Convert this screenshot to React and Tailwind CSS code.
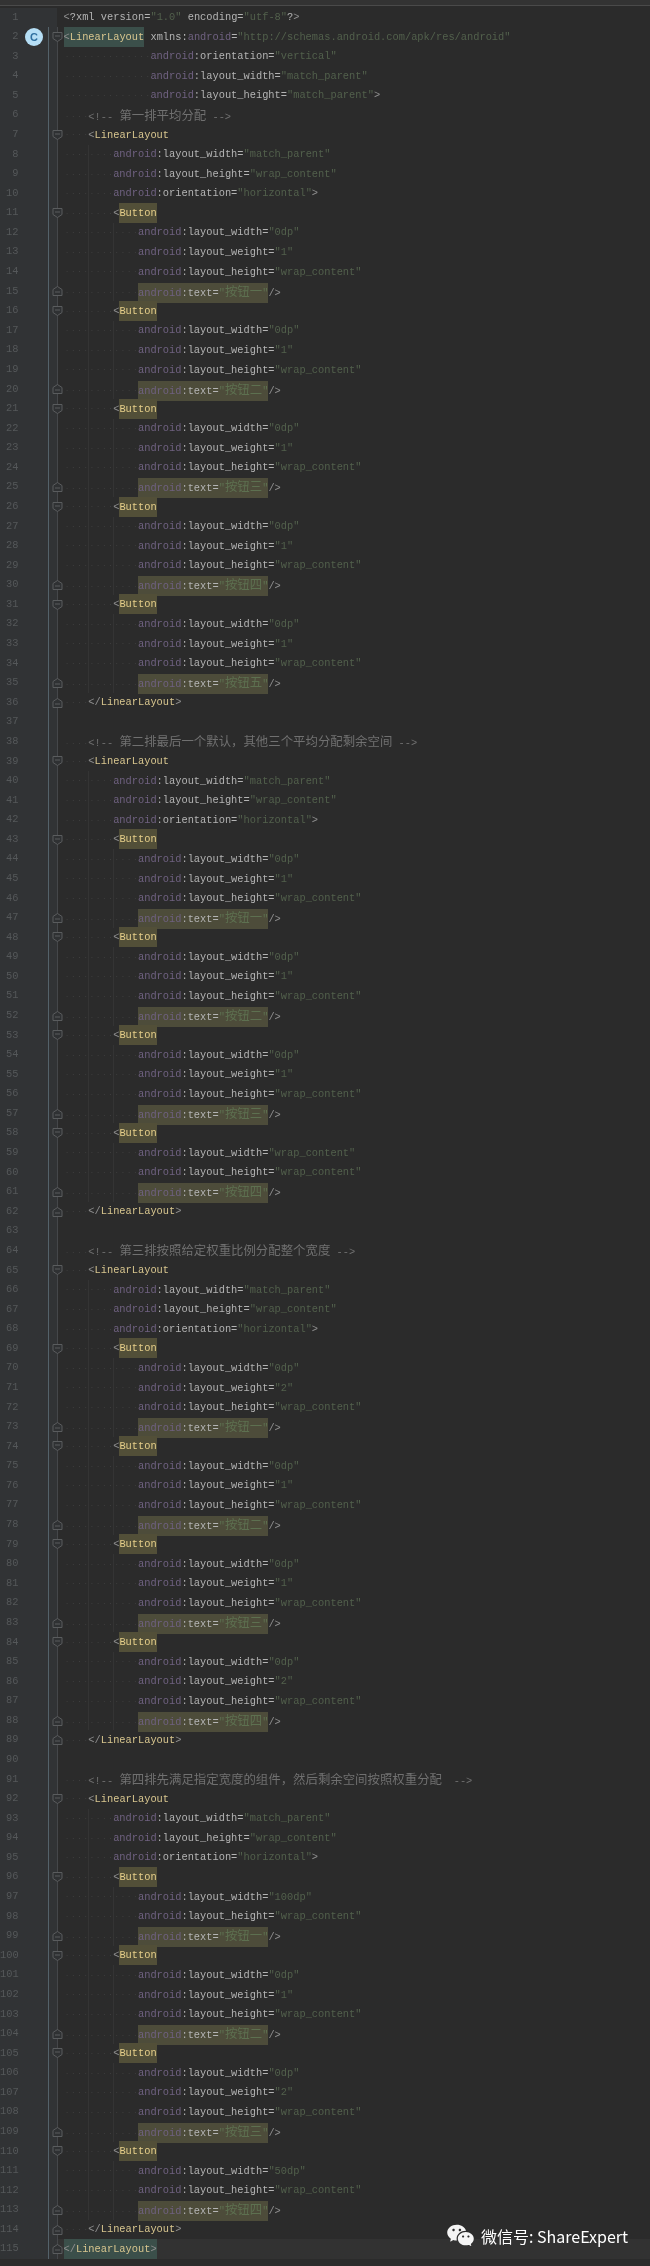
import { RiWechatFill } from 'react-icons/ri';

const attr = (name, value, end = '') => ({ name, value, end });

const row = (weight, width = '0dp') => [
  attr('layout_width', width),
  ...(weight ? [attr('layout_weight', weight)] : []),
  attr('layout_height', 'wrap_content'),
];

const groups = [
  {
    comment: '第一排平均分配',
    buttons: [
      ['按钮一', row('1')], ['按钮二', row('1')], ['按钮三', row('1')], ['按钮四', row('1')], ['按钮五', row('1')],
    ],
  },
  {
    comment: '第二排最后一个默认，其他三个平均分配剩余空间',
    buttons: [
      ['按钮一', row('1')], ['按钮二', row('1')], ['按钮三', row('1')], ['按钮四', row(null, 'wrap_content')],
    ],
  },
  {
    comment: '第三排按照给定权重比例分配整个宽度',
    buttons: [
      ['按钮一', row('2')], ['按钮二', row('1')], ['按钮三', row('1')], ['按钮四', row('2')],
    ],
  },
  {
    comment: '第四排先满足指定宽度的组件，然后剩余空间按照权重分配  ',
    buttons: [
      ['按钮一', row(null, '100dp')], ['按钮二', row('1')], ['按钮三', row('2')], ['按钮四', row(null, '50dp')],
    ],
  },
];

function buildLines() {
  const lines = [
    { type: 'xml' },
    { type: 'root' },
    { type: 'attr', pad: 14, ...attr('orientation', 'vertical') },
    { type: 'attr', pad: 14, ...attr('layout_width', 'match_parent') },
    { type: 'attr', pad: 14, ...attr('layout_height', 'match_parent', '>') },
  ];
  groups.forEach((g, i) => {
    if (i > 0) lines.push({ type: 'blank' });
    lines.push({ type: 'comment', pad: 4, text: g.comment });
    lines.push({ type: 'open', pad: 4, tag: 'LinearLayout' });
    lines.push({ type: 'attr', pad: 8, ...attr('layout_width', 'match_parent') });
    lines.push({ type: 'attr', pad: 8, ...attr('layout_height', 'wrap_content') });
    lines.push({ type: 'attr', pad: 8, ...attr('orientation', 'horizontal', '>') });
    g.buttons.forEach(([label, attrs]) => {
      lines.push({ type: 'open', pad: 8, tag: 'Button', hl: true });
      attrs.forEach((a) => lines.push({ type: 'attr', pad: 12, ...a }));
      lines.push({ type: 'text', pad: 12, label });
    });
    lines.push({ type: 'close', pad: 4 });
    if (i === groups.length - 1) lines.push({ type: 'rootClose' });
  });
  return lines;
}

const Lt = () => <span className="text-[#8f8f8f]">&lt;</span>;
const Gt = () => <span className="text-[#8f8f8f]">&gt;</span>;

// leading whitespace is shown as faint dots in the editor
const Pad = ({ n }) => (
  <span
    className="inline-block h-[3px] bg-[radial-gradient(circle,#3e3e3e_0.5px,transparent_0.8px)] bg-[length:1ch_3px] align-middle"
    style={{ width: `${n}ch` }}
  />
);

const Android = () => (
  <>
    <span className="text-[#6f6180]">android</span>
    <span className="text-[#a9a9a9]">:</span>
  </>
);

const Cjk = ({ children }) => (
  <span className="font-['Noto_Sans_CJK_SC',sans-serif] text-[12.42px] leading-none">{children}</span>
);

function Code({ line }) {
  switch (line.type) {
    case 'xml':
      return (
        <>
          <Lt /><span className="text-[#b4b4b4]">?xml version=</span>
          <span className="text-[#52604c]">"1.0"</span>
          <span className="text-[#b4b4b4]"> encoding=</span>
          <span className="text-[#52604c]">"utf-8"</span>
          <span className="text-[#b4b4b4]">?</span><Gt />
        </>
      );
    case 'root':
      return (
        <>
          <span className="relative before:absolute before:inset-x-0 before:top-[-4px] before:bottom-[-4px] before:bg-[#3b4f4a]">
            <span className="relative">
              <Lt /><span className="text-[#d8c68f]">LinearLayout</span>
            </span>
          </span>
          <span className="text-[#b4b4b4]"> xmlns:</span>
          <span className="text-[#6f6180]">android</span>
          <span className="text-[#b4b4b4]">=</span>
          <span className="text-[#52604c]">"http://schemas.android.com/apk/res/android"</span>
        </>
      );
    case 'attr':
      return (
        <>
          <Pad n={line.pad} /><Android />
          <span className="text-[#b4b4b4]">{line.name}=</span>
          <span className="text-[#52604c]">"{line.value}"</span>
          {line.end && <Gt />}
        </>
      );
    case 'comment':
      return (
        <>
          <Pad n={line.pad} />
          <span className="text-[#707070]">
            {'<!-- '}
            <Cjk>{line.text}</Cjk>
            {' -->'}
          </span>
        </>
      );
    case 'open':
      return (
        <>
          <Pad n={line.pad} /><Lt />
          {line.hl ? (
            <span className="relative text-[#e6cf8a] before:absolute before:inset-x-0 before:top-[-4px] before:bottom-[-4px] before:bg-[#524f38]">
              <span className="relative">{line.tag}</span>
            </span>
          ) : (
            <span className="text-[#d8c68f]">{line.tag}</span>
          )}
        </>
      );
    case 'text':
      return (
        <>
          <Pad n={line.pad} />
          <span className="relative before:absolute before:inset-x-0 before:top-[-4px] before:bottom-[-4px] before:bg-[#4d4c3a]">
            <span className="relative">
              <Android />
              <span className="text-[#b4b4b4]">text=</span>
              <span className="text-[#5d7050]">
                "<Cjk>{line.label}</Cjk>"
              </span>
            </span>
          </span>
          <span className="text-[#8f8f8f]">/&gt;</span>
        </>
      );
    case 'close':
      return (
        <>
          <Pad n={line.pad} /><span className="text-[#8f8f8f]">&lt;/</span>
          <span className="text-[#d8c68f]">LinearLayout</span><Gt />
        </>
      );
    case 'rootClose':
      return (
        <span className="relative before:absolute before:inset-x-0 before:top-[-4px] before:bottom-[-4px] before:bg-[#3b4f4a]">
          <span className="relative">
            <span className="text-[#8f8f8f]">&lt;/</span>
            <span className="text-[#d8c68f]">LinearLayout</span><Gt />
          </span>
        </span>
      );
    default:
      return null;
  }
}

// fold marker on the gutter edge: pentagon pointing down for an open tag, up for a close
function Fold({ kind }) {
  return (
    <svg width="11" height="11" viewBox="0 0 11 11" className="absolute left-[52px] top-1/2 -translate-y-1/2">
      <path
        d={kind === 'open' ? 'M1 1h9v6l-4.500 3L1 7z M3 4.500h5' : 'M1 10h9V4L5.500 1 1 4z M3 6.500h5'}
        fill="#2f3133"
        stroke="#5a5c5e"
      />
    </svg>
  );
}

const foldKind = (line) => {
  if (line.type === 'root' || line.type === 'open') return 'open';
  if (line.type === 'text' || line.type === 'close' || line.type === 'rootClose') return 'close';
  return null;
};

export default function App() {
  const lines = buildLines();

  return (
    <div className="relative h-[2266px] w-[650px] overflow-hidden bg-[#2b2b2b] font-['Liberation_Mono',monospace] text-[10.35px] blur-[0.35px]">
      <div className="h-[6px] border-b border-[#4a4a4a] bg-[#333333]" />
      <div className="flex flex-col pt-[1.5px]">
        {lines.map((line, i) => (
          <div
            key={i}
            className={`relative flex h-[19.58px] items-center ${line.type === 'rootClose' ? 'bg-[#323232]' : ''}`}
          >
            <div className="relative flex h-full w-[57px] shrink-0 items-center bg-[#313335]">
              <span className="w-[18.500px] text-right text-[#55585a]">{i + 1}</span>
              {line.type === 'root' && (
                <span className="absolute left-[25px] top-1/2 flex h-[18px] w-[18px] -translate-y-1/2 items-center justify-center rounded-full bg-[#b5def5] font-['Liberation_Sans',sans-serif] text-[11px] font-bold text-[#2f6f9f]">
                  C
                </span>
              )}
              {i > 0 && <span className="absolute left-[48px] top-0 h-full w-px bg-[#54626a]" />}
              {i > 0 && <span className="absolute left-[57px] top-0 h-full w-px bg-[#45474a]" />}
              {foldKind(line) && <Fold kind={foldKind(line)} />}
            </div>
            {/* indent guides */}
            {line.pad >= 8 && line.pad < 14 && <span className="absolute left-[88px] top-0 h-full w-px bg-[#343434]" />}
            {line.pad >= 12 && line.pad < 14 && <span className="absolute left-[113px] top-0 h-full w-px bg-[#343434]" />}
            <pre className="relative pl-[6.500px] font-['Liberation_Mono',monospace] leading-none">
              <Code line={line} />
            </pre>
          </div>
        ))}
      </div>

      {/* wechat watermark */}
      <div className="absolute left-[446px] top-[2221px] flex items-center gap-[6px] text-white">
        <RiWechatFill className="h-[29px] w-[29px] text-[#f4f4f4]" />
        <span className="font-['Noto_Sans_CJK_SC',sans-serif] text-[16px] leading-none">微信号: ShareExpert</span>
      </div>
    </div>
  );
}
